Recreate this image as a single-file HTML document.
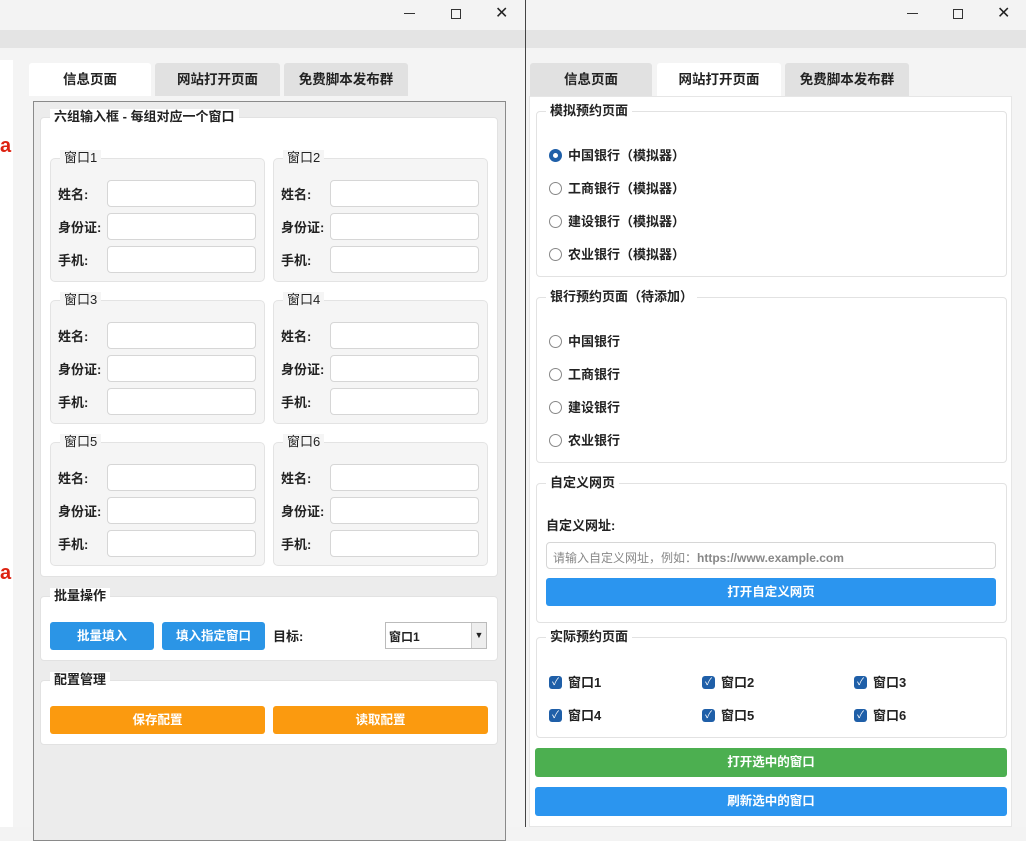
<!DOCTYPE html><html><head><meta charset="utf-8"><style>
*{box-sizing:border-box;margin:0;padding:0}
body{width:1026px;height:827px;position:relative;overflow:hidden;background:#f3f3f3;font-family:"Liberation Sans","Noto Sans CJK SC",sans-serif;font-size:13px;color:#222}
.a{position:absolute}
.t{font-weight:bold;font-size:13px;white-space:nowrap}
.tab{position:absolute;top:63px;height:33px;text-align:center;line-height:33px;font-size:13.5px;font-weight:bold;background:#e1e1e1;border-radius:3px 3px 0 0}
.tab.on{background:#fff}
.grp{position:absolute;background:#fff;border:1px solid #e2e2e2;border-radius:4px}
.gt{position:absolute;background:inherit;padding:0 4px;font-weight:bold;font-size:13px;top:-9px;left:9px;line-height:16px}
.sub{position:absolute;background:#f5f5f5;border:1px solid #e3e3e3;border-radius:5px}
.in{position:absolute;background:#fff;border:1px solid #d6d6d6;border-radius:4px;height:27px}
.btn{position:absolute;color:#fff;text-align:center;font-weight:bold;border-radius:3px;font-size:12.5px}
.ctl{position:absolute;top:6px;font-size:16px;color:#222}
.rad{position:absolute;width:13px;height:13px;border:1px solid #888;border-radius:50%;background:#fff}
.chk{position:absolute;width:13px;height:13px;border-radius:3px;background:#1f5fa8;color:#fff;font-size:10px;line-height:13px;text-align:center}
</style></head><body>
<div class="a" style="left:0;top:0;width:525px;height:30px;background:#f3f3f3"></div>
<div class="a" style="left:0;top:30px;width:525px;height:18px;background:#e4e4e4"></div>
<div class="a" style="left:0;top:48px;width:525px;height:779px;background:#f4f4f4"></div>
<div class="a" style="left:0;top:60px;width:13px;height:767px;background:#fff"></div>
<div class="a" style="left:0;top:135px;width:12px;overflow:hidden;color:#d21;font-weight:bold;font-size:20px">ai</div>
<div class="a" style="left:0;top:562px;width:12px;overflow:hidden;color:#d21;font-weight:bold;font-size:20px">ai</div>
<div class="a" style="left:404px;top:13px;width:11px;height:1px;background:#333"></div>
<div class="a" style="left:451px;top:9px;width:10px;height:10px;border:1.3px solid #333"></div>
<div class="ctl" style="left:495px;top:3px">✕</div>
<div class="tab on" style="left:29px;width:122px">信息页面</div>
<div class="tab" style="left:155px;width:125px">网站打开页面</div>
<div class="tab" style="left:284px;width:124px">免费脚本发布群</div>
<div class="a" style="left:33px;top:101px;width:473px;height:740px;border:1px solid #8a8a8a;background:#ececec"></div>
<div class="grp" style="left:40px;top:117px;width:458px;height:460px"><div class="gt">六组输入框 - 每组对应一个窗口</div></div>
<div class="grp" style="left:40px;top:596px;width:458px;height:65px"><div class="gt">批量操作</div></div>
<div class="grp" style="left:40px;top:680px;width:458px;height:65px"><div class="gt">配置管理</div></div>
<div id="subs"></div>
<div class="btn" style="left:50px;top:622px;width:104px;height:28px;line-height:28px;background:#2b95e6">批量填入</div>
<div class="btn" style="left:162px;top:622px;width:103px;height:28px;line-height:28px;background:#2b95e6">填入指定窗口</div>
<div class="a t" style="left:273px;top:626px">目标:</div>
<div class="a" style="left:385px;top:622px;width:102px;height:27px;border:1px solid #bbb;background:#fff"><span class="t" style="position:absolute;left:3px;top:5px;font-size:12px">窗口1</span><span style="position:absolute;right:0;top:0;width:15px;height:25px;background:#eee;border-left:1px solid #ccc;font-size:9px;text-align:center;line-height:25px">▼</span></div>
<div class="btn" style="left:50px;top:706px;width:215px;height:28px;line-height:28px;background:#fb9a0f">保存配置</div>
<div class="btn" style="left:273px;top:706px;width:215px;height:28px;line-height:28px;background:#fb9a0f">读取配置</div>
<div class="a" style="left:525px;top:0;width:1px;height:827px;background:#444"></div>
<div class="a" style="left:526px;top:30px;width:500px;height:18px;background:#e4e4e4"></div>
<div class="a" style="left:526px;top:48px;width:500px;height:779px;background:#f4f4f4"></div>
<div class="a" style="left:907px;top:13px;width:11px;height:1px;background:#333"></div>
<div class="a" style="left:953px;top:9px;width:10px;height:10px;border:1.3px solid #333"></div>
<div class="ctl" style="left:997px;top:3px">✕</div>
<div class="tab" style="left:530px;width:122px">信息页面</div>
<div class="tab on" style="left:657px;width:124px">网站打开页面</div>
<div class="tab" style="left:785px;width:124px">免费脚本发布群</div>
<div class="a" style="left:529px;top:96px;width:483px;height:731px;background:#fff;border:1px solid #e6e6e6"></div>
<div class="grp" style="left:536px;top:111px;width:471px;height:166px"><div class="gt">模拟预约页面</div></div>
<div class="grp" style="left:536px;top:297px;width:471px;height:166px"><div class="gt">银行预约页面（待添加）</div></div>
<div class="grp" style="left:536px;top:483px;width:471px;height:140px"><div class="gt">自定义网页</div></div>
<div class="grp" style="left:536px;top:637px;width:471px;height:101px"><div class="gt">实际预约页面</div></div>
<div class="rad" style="left:549px;top:149px;border:4px solid #1f5fa8"></div>
<div class="a t" style="left:568px;top:145px">中国银行（模拟器）</div>
<div class="rad" style="left:549px;top:182px"></div><div class="a t" style="left:568px;top:178px">工商银行（模拟器）</div>
<div class="rad" style="left:549px;top:215px"></div><div class="a t" style="left:568px;top:211px">建设银行（模拟器）</div>
<div class="rad" style="left:549px;top:248px"></div><div class="a t" style="left:568px;top:244px">农业银行（模拟器）</div>
<div class="rad" style="left:549px;top:335px"></div><div class="a t" style="left:568px;top:331px">中国银行</div>
<div class="rad" style="left:549px;top:368px"></div><div class="a t" style="left:568px;top:364px">工商银行</div>
<div class="rad" style="left:549px;top:401px"></div><div class="a t" style="left:568px;top:397px">建设银行</div>
<div class="rad" style="left:549px;top:434px"></div><div class="a t" style="left:568px;top:430px">农业银行</div>
<div class="a t" style="left:546px;top:515px">自定义网址:</div>
<div class="in" style="left:546px;top:542px;width:450px"><span style="position:absolute;left:6px;top:6px;color:#888;font-size:12px;white-space:nowrap">请输入自定义网址，例如：<b>https://www.example.com</b></span></div>
<div class="btn" style="left:546px;top:578px;width:450px;height:28px;line-height:28px;background:#2b95ef">打开自定义网页</div>
<div class="chk" style="left:549px;top:676px">✓</div><div class="a t" style="left:568px;top:672px">窗口1</div>
<div class="chk" style="left:702px;top:676px">✓</div><div class="a t" style="left:721px;top:672px">窗口2</div>
<div class="chk" style="left:854px;top:676px">✓</div><div class="a t" style="left:873px;top:672px">窗口3</div>
<div class="chk" style="left:549px;top:709px">✓</div><div class="a t" style="left:568px;top:705px">窗口4</div>
<div class="chk" style="left:702px;top:709px">✓</div><div class="a t" style="left:721px;top:705px">窗口5</div>
<div class="chk" style="left:854px;top:709px">✓</div><div class="a t" style="left:873px;top:705px">窗口6</div>
<div class="btn" style="left:535px;top:748px;width:472px;height:29px;line-height:29px;background:#4caf50">打开选中的窗口</div>
<div class="btn" style="left:535px;top:787px;width:472px;height:29px;line-height:29px;background:#2b95ef">刷新选中的窗口</div>
<script>
var h='';var xs=[50,273],ys=[158,300,442];
for(var r=0;r<3;r++)for(var c=0;c<2;c++){var n=r*2+c+1,x=xs[c],y=ys[r];
h+='<div class="sub" style="left:'+x+'px;top:'+y+'px;width:215px;height:124px"><div class="gt" style="font-weight:normal;left:9px;top:-9px;background:#f5f5f5">窗口'+n+'</div></div>';
var L=['姓名:','身份证:','手机:'];
for(var i=0;i<3;i++){h+='<div class="a t" style="left:'+(x+8)+'px;top:'+(y+26+i*33)+'px">'+L[i]+'</div><div class="in" style="left:'+(x+57)+'px;top:'+(y+22+i*33)+'px;width:149px"></div>';}}
document.getElementById('subs').innerHTML=h;
</script>
</body></html>
